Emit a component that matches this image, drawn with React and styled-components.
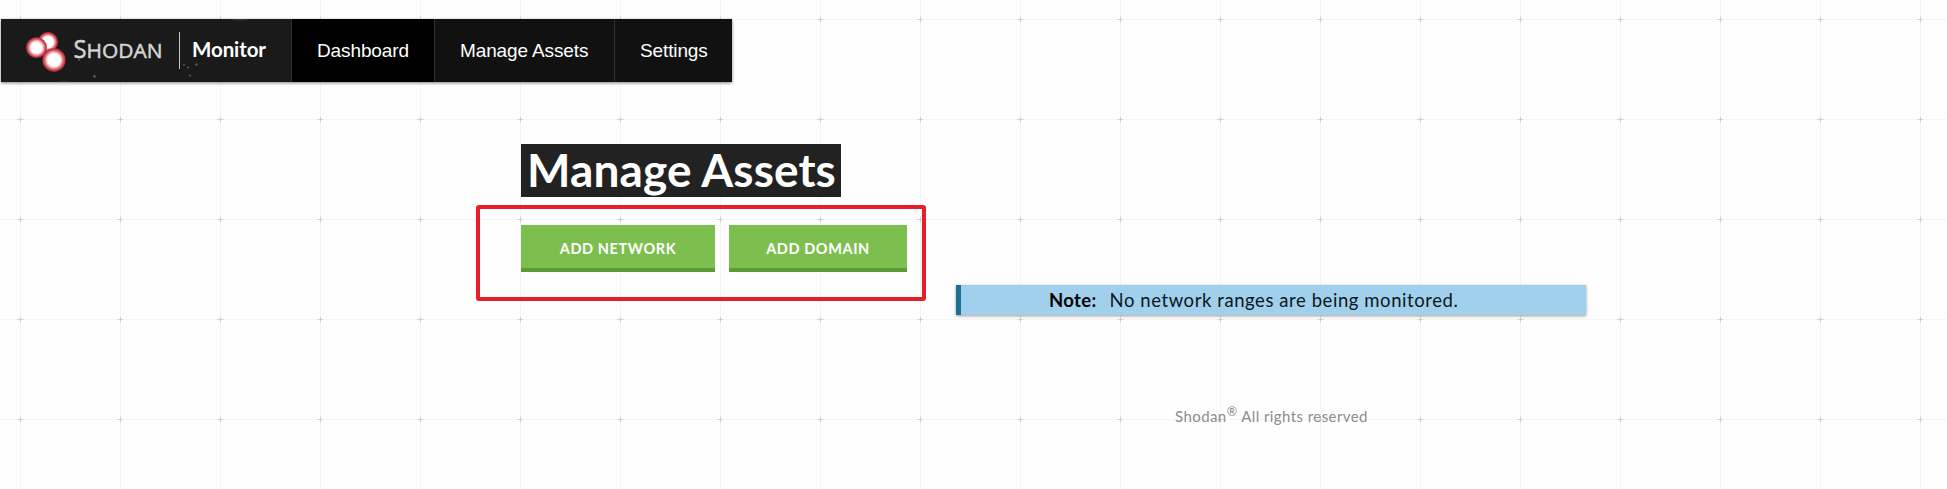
import React from 'react';
import styled, { createGlobalStyle } from 'styled-components';

const Global = createGlobalStyle`
  *, *::before, *::after { box-sizing: border-box; }
  body { margin: 0; background: #fefefe; font-family: Lato, "Open Sans", sans-serif; }
`;

const Page = styled.div`
  position: relative;
  height: 489px;
  overflow: hidden;
  padding: 19px 0 0 1px;
`;

const Backdrop = styled.svg`
  position: absolute;
  inset: 0;
  width: 100%;
  height: 100%;
  z-index: -1;
`;

const Nav = styled.nav`
  display: flex;
  width: 731px;
  height: 63px;
  background: #111;
  box-shadow: 0 1px 3px rgba(0, 0, 0, 0.5);
`;

const Brand = styled.a`
  display: block;
  width: 290px;
  height: 63px;
  background: #1a1a1a;
`;

const NavItem = styled.a`
  width: ${(p) => p.$width}px;
  padding-left: 25px;
  border-left: 1px solid #303030;
  background: ${(p) => (p.$active ? '#000' : '#111')};
  color: #fff;
  font: 19px/63px "Liberation Sans", Arial, sans-serif;
  letter-spacing: -0.12px;
  white-space: nowrap;
`;

const Main = styled.main`
  padding: 62px 0 0 520px;
`;

const Title = styled.h1`
  width: 320px;
  height: 53px;
  margin: 0;
  padding-left: 6px;
  background: #222;
  color: #fff;
  font-size: 46px;
  font-weight: 700;
  line-height: 52px;
  letter-spacing: 0.1px;
  white-space: nowrap;
`;

const Actions = styled.div`
  display: flex;
  gap: 14px;
  width: 450px;
  height: 96px;
  margin: 8px 0 0 -45px;
  padding: 16px 0 0 41px;
  border: 4px solid #e61e28;
  border-radius: 3px;
`;

const Button = styled.button`
  flex: none;
  width: ${(p) => p.$width}px;
  height: 47px;
  padding: 4px 0 0;
  border: 0;
  border-bottom: 4px solid #5c9a37;
  background: #7cbf4f;
  color: #fff;
  font: 700 14.5px/39px Lato, sans-serif;
  letter-spacing: 0.6px;
`;

const Note = styled.p`
  display: flex;
  width: 630px;
  height: 30px;
  margin: -16px 0 0 435px;
  padding-left: 88px;
  border-left: 5px solid #1e6f98;
  background: #a0d0eb;
  box-shadow: 0 1px 3px rgba(0, 0, 0, 0.4);
  color: #0c1820;
  font-size: 18.5px;
  line-height: 30px;
  letter-spacing: 0.57px;
  white-space: nowrap;
`;

const NoteLabel = styled.strong`
  width: 60.5px;
  color: #000;
  letter-spacing: 0.35px;
`;

const Footer = styled.footer`
  margin: 90px 0 0 654px;
  color: #8c8c8c;
  font-size: 15px;
  line-height: 22px;
  letter-spacing: 0.42px;
  white-space: nowrap;

  sup {
    font-size: 12.5px;
    line-height: 0;
    vertical-align: 6px;
  }
`;

function Grid() {
  return (
    <Backdrop aria-hidden="true">
      <defs>
        <pattern id="grid" x="20" y="19" width="100" height="100" patternUnits="userSpaceOnUse">
          <path d="M0 .5H100M.5 0V100" stroke="#f5f5f5" />
          <path d="M0 .5H4M97 .5H100M.5 0V4M.5 97V100" stroke="#dedede" />
          <path d="M0 .5H2M99 .5H100M.5 0V2M.5 99V100" stroke="#cacaca" />
        </pattern>
      </defs>
      <rect width="100%" height="100%" fill="url(#grid)" />
    </Backdrop>
  );
}

const balls = [
  { x: 48, y: 42, r: 10 },
  { x: 36.5, y: 47.7, r: 10.4 },
  { x: 54, y: 60, r: 11.7 },
];

function Logo() {
  return (
    <svg width="290" height="63" viewBox="1 19 290 63" role="img" aria-label="Shodan Monitor">
      <defs>
        <radialGradient id="ball">
          <stop offset="0.52" stopColor="#fff" />
          <stop offset="0.62" stopColor="#f6cfd0" />
          <stop offset="0.74" stopColor="#e58b90" />
          <stop offset="0.88" stopColor="#c93e48" />
          <stop offset="1" stopColor="#b52a36" />
        </radialGradient>
      </defs>
      {balls.map((b) => (
        <circle key={b.x} cx={b.x} cy={b.y} r={b.r} fill="url(#ball)" />
      ))}
      <g fill="#d4d4d4" stroke="#d4d4d4" strokeWidth="0.5" fontFamily="'Open Sans', sans-serif">
        <text x="73.5" y="58" fontSize="26" textLength="13" lengthAdjust="spacingAndGlyphs">S</text>
        <text x="86.5" y="58" fontSize="20.5" textLength="76" lengthAdjust="spacingAndGlyphs">HODAN</text>
      </g>
      <path d="M179.5 32V69" stroke="#c8c8c8" />
      <text x="192" y="57" fill="#fff" fontFamily="Lato, sans-serif" fontWeight="700" fontSize="20.5" textLength="74">Monitor</text>
      <g fill="#565656">
        <circle cx="94.5" cy="76.5" r="1.4" />
        <circle cx="184" cy="65" r="1.1" />
        <circle cx="188" cy="67.5" r="1.1" />
        <circle cx="196.5" cy="64.5" r="1.3" />
        <circle cx="190" cy="75.5" r="1.1" />
        <circle cx="79" cy="60" r="1" />
      </g>
      <ellipse cx="240" cy="19" rx="9" ry="1.8" fill="#303030" />
      <ellipse cx="64" cy="82" rx="5" ry="1.6" fill="#2c2c2c" />
    </svg>
  );
}

export default function App() {
  return (
    <>
      <Global />
      <Page>
        <Grid />
        <Nav>
          <Brand><Logo /></Brand>
          <NavItem $active $width={143}>Dashboard</NavItem>
          <NavItem $width={180}>Manage Assets</NavItem>
          <NavItem $width={118}>Settings</NavItem>
        </Nav>
        <Main>
          <Title>Manage Assets</Title>
          <Actions>
            <Button $width={194}>ADD NETWORK</Button>
            <Button $width={178}>ADD DOMAIN</Button>
          </Actions>
          <Note>
            <NoteLabel>Note:</NoteLabel>
            <span>No network ranges are being monitored.</span>
          </Note>
          <Footer>Shodan<sup>®</sup> All rights reserved</Footer>
        </Main>
      </Page>
    </>
  );
}
